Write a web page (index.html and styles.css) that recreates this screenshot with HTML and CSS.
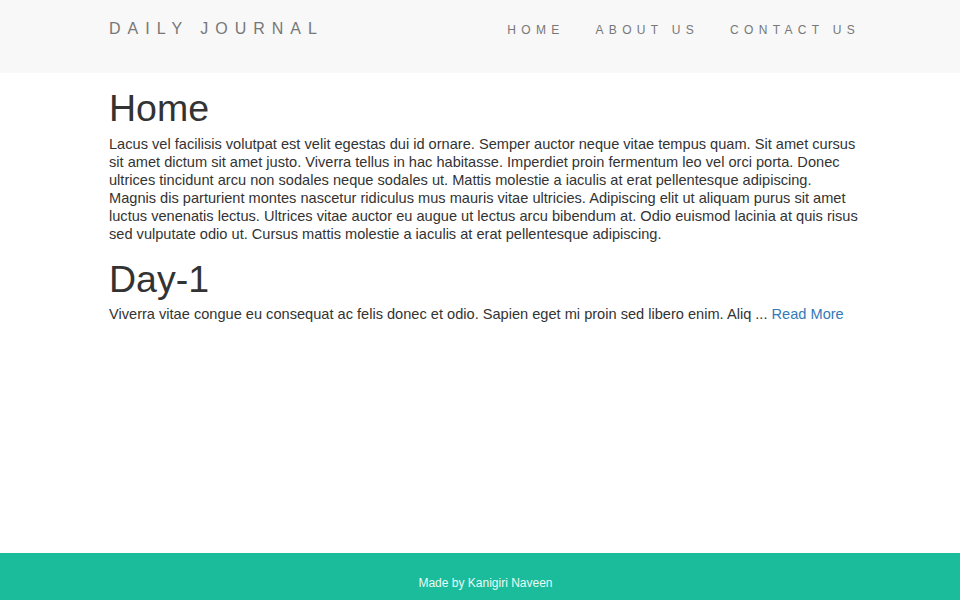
FILE: index.html
```html
<!DOCTYPE html>
<html lang="en">
<head>
<meta charset="utf-8">
<title>Daily Journal</title>
<link rel="stylesheet" href="styles.css">
</head>
<body>
<header class="navbar">
  <div class="container nav-inner">
    <a class="brand" href="#">DAILY JOURNAL</a>
    <nav class="nav-links">
      <a href="#">HOME</a>
      <a href="#">ABOUT US</a>
      <a href="#">CONTACT US</a>
    </nav>
  </div>
</header>
<main class="container content">
  <h1>Home</h1>
  <p>Lacus vel facilisis volutpat est velit egestas dui id ornare. Semper auctor neque vitae tempus quam. Sit amet cursus sit amet dictum sit amet justo. Viverra tellus in hac habitasse. Imperdiet proin fermentum leo vel orci porta. Donec ultrices tincidunt arcu non sodales neque sodales ut. Mattis molestie a iaculis at erat pellentesque adipiscing. Magnis dis parturient montes nascetur ridiculus mus mauris vitae ultricies. Adipiscing elit ut aliquam purus sit amet luctus venenatis lectus. Ultrices vitae auctor eu augue ut lectus arcu bibendum at. Odio euismod lacinia at quis risus sed vulputate odio ut. Cursus mattis molestie a iaculis at erat pellentesque adipiscing.</p>
  <h1>Day-1</h1>
  <p>Viverra vitae congue eu consequat ac felis donec et odio. Sapien eget mi proin sed libero enim. Aliq ... <a href="#">Read More</a></p>
</main>
<footer class="footer">
  <p>Made by Kanigiri Naveen</p>
</footer>
</body>
</html>
```
FILE: styles.css
```css
html, body {
  margin: 0;
  padding: 0;
  height: 100%;
}
body {
  font-family: "Liberation Sans", Arial, Helvetica, sans-serif;
  color: #333;
  background: #fff;
  display: flex;
  flex-direction: column;
  min-height: 100vh;
}
.container {
  width: 750px;
  margin-left: 109px;
}
.navbar {
  background: #f8f8f8;
  height: 73px;
  flex: none;
}
.nav-inner {
  display: flex;
  justify-content: space-between;
  align-items: flex-start;
  padding-top: 19px;
  width: 751px;
}
.brand {
  color: #777;
  text-decoration: none;
  font-size: 16px;
  letter-spacing: 7px;
  line-height: 20px;
}
.nav-links {
  display: flex;
  gap: 31px;
  padding-top: 1px;
}
.nav-links a {
  color: #777;
  text-decoration: none;
  font-size: 12px;
  letter-spacing: 5.3px;
  line-height: 20px;
}
.content {
  flex: 1;
}
h1 {
  font-size: 37.5px;
  font-weight: 500;
  line-height: 40px;
  margin: 15px 0 7px;
}
p {
  font-size: 14.6px;
  line-height: 18px;
  margin: 0;
}
.content p + h1 {
  margin-top: 16px;
  margin-bottom: 6px;
}
a {
  color: #337ab7;
  text-decoration: none;
}
.footer {
  background: #1abc9c;
  height: 47px;
  flex: none;
  text-align: center;
}
.footer p {
  color: #eafaf5;
  font-size: 12px;
  line-height: 14px;
  padding: 23px 0 0 11px;
}
```
